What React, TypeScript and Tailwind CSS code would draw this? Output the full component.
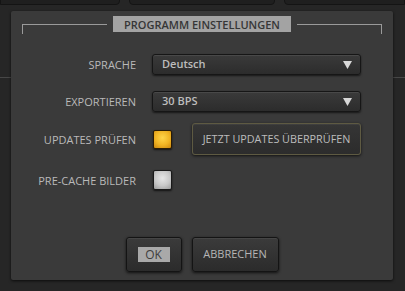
import React from "react";

function Caret() {
  return (
    <svg width="9" height="8" viewBox="0 0 9 8" className="shrink-0">
      <path d="M0 0 H9 L4.5 8 Z" fill="#d8d8d8" />
    </svg>
  );
}

function Dropdown({ value }: { value: string }) {
  return (
    <div className="w-[209px] h-[21px] rounded-[3px] border border-[#161616] bg-[linear-gradient(to_bottom,#3a3a3a,#2c2c2c)] shadow-[inset_0_1px_0_rgba(255,255,255,0.08),0_1px_2px_rgba(0,0,0,0.6)] flex items-center justify-between pl-[9px] pr-[8px]">
      <span className="text-[11px] font-semibold text-[#bdbdbd]">{value}</span>
      <Caret />
    </div>
  );
}

function Label({ children }: { children: React.ReactNode }) {
  return (
    <div className="w-[125px] text-right text-[11px] font-medium text-[#b9b9b9] leading-none">
      {children}
    </div>
  );
}

export default function App() {
  return (
    <div
      className="w-[405px] h-[291px] overflow-hidden flex flex-col bg-[linear-gradient(to_bottom,#262626_77px,#474747_77px,#474747_78px,#262626_78px)]"
      style={{ fontFamily: '"Open Sans", "Noto Sans", sans-serif' }}
    >
      {/* top tiles */}
      <div className="flex h-[5px] shrink-0 gap-[9px]">
        <div className="w-[120px] -mt-[6px] h-[11px] rounded-br-[4px] border border-[#141414] bg-[#1f1f1f]" />
        <div className="w-[146px] -mt-[6px] h-[11px] rounded-b-[4px] border border-[#141414] bg-[#1f1f1f]" />
        <div className="flex-1 -mt-[6px] h-[11px] rounded-bl-[4px] border border-[#141414] bg-[#1f1f1f]" />
      </div>

      {/* panel */}
      <div className="mt-[6px] ml-[11px] w-[382px] h-[269px] bg-[#3a3a3a] rounded-[2px] shadow-[0_1px_3px_rgba(0,0,0,0.7)] flex flex-col">
        {/* title */}
        <div className="flex items-start px-[11px] pt-[5px]">
          <div className="flex-1 mt-[8px] h-[10px] border-t border-l border-[#9a9a9a]" />
          <div className="mx-[6px] w-[178px] h-[16px] bg-[#a3a3a3] flex items-center justify-center text-[11px] font-semibold text-[#363636] leading-none">
            PROGRAMM EINSTELLUNGEN
          </div>
          <div className="flex-1 mt-[8px] h-[10px] border-t border-r border-[#9a9a9a]" />
        </div>

        {/* rows */}
        <div className="flex items-center mt-[20px] h-[21px]">
          <Label>SPRACHE</Label>
          <div className="ml-[16px]">
            <Dropdown value="Deutsch" />
          </div>
        </div>

        <div className="flex items-center mt-[16px] h-[21px]">
          <Label>EXPORTIEREN</Label>
          <div className="ml-[16px]">
            <Dropdown value="30 BPS" />
          </div>
        </div>

        <div className="flex items-center mt-[11px] h-[32px]">
          <Label>UPDATES PRÜFEN</Label>
          <div className="ml-[17px] w-[19px] h-[19px] rounded-[2px] border border-[#2a1c06] bg-[radial-gradient(circle_at_50%_40%,#ffd54a,#f0b323_55%,#c98510)] shadow-[0_1px_2px_rgba(0,0,0,0.7)]" />
          <div className="ml-[20px] w-[169px] h-[32px] rounded-[3px] border border-[#5e5a42] bg-[linear-gradient(to_bottom,#353535,#2c2c2c)] shadow-[0_1px_3px_rgba(0,0,0,0.7),inset_0_1px_0_rgba(255,255,255,0.05)] flex items-center justify-center text-[10.8px] text-[#bcbcbc]">
            JETZT UPDATES ÜBERPRÜFEN
          </div>
        </div>

        <div className="flex items-center mt-[15px] h-[20px]">
          <Label>PRE-CACHE BILDER</Label>
          <div className="ml-[17px] w-[19px] h-[20px] rounded-[2px] border border-[#1a1a1a] bg-[radial-gradient(circle_at_50%_40%,#e6e6e6,#c8c8c8_55%,#9a9a9a)] shadow-[0_1px_2px_rgba(0,0,0,0.7)]" />
        </div>

        {/* buttons */}
        <div className="flex justify-center gap-[10px] mt-[47px]">
          <div className="w-[56px] h-[35px] rounded-[3px] border border-[#141414] bg-[linear-gradient(to_bottom,#3b3b3b,#2b2b2b)] shadow-[0_1px_3px_rgba(0,0,0,0.7),inset_0_1px_0_rgba(255,255,255,0.06)] flex items-center justify-center">
            <span className="w-[32px] h-[15px] bg-[#a9a9a9] text-[#3e3e3e] text-[12px] leading-none flex items-center justify-center">
              OK
            </span>
          </div>
          <div className="w-[87px] h-[35px] rounded-[3px] border border-[#141414] bg-[linear-gradient(to_bottom,#3b3b3b,#2b2b2b)] shadow-[0_1px_3px_rgba(0,0,0,0.7),inset_0_1px_0_rgba(255,255,255,0.06)] flex items-center justify-center text-[11px] text-[#b5b5b5]">
            ABBRECHEN
          </div>
        </div>
      </div>
    </div>
  );
}
